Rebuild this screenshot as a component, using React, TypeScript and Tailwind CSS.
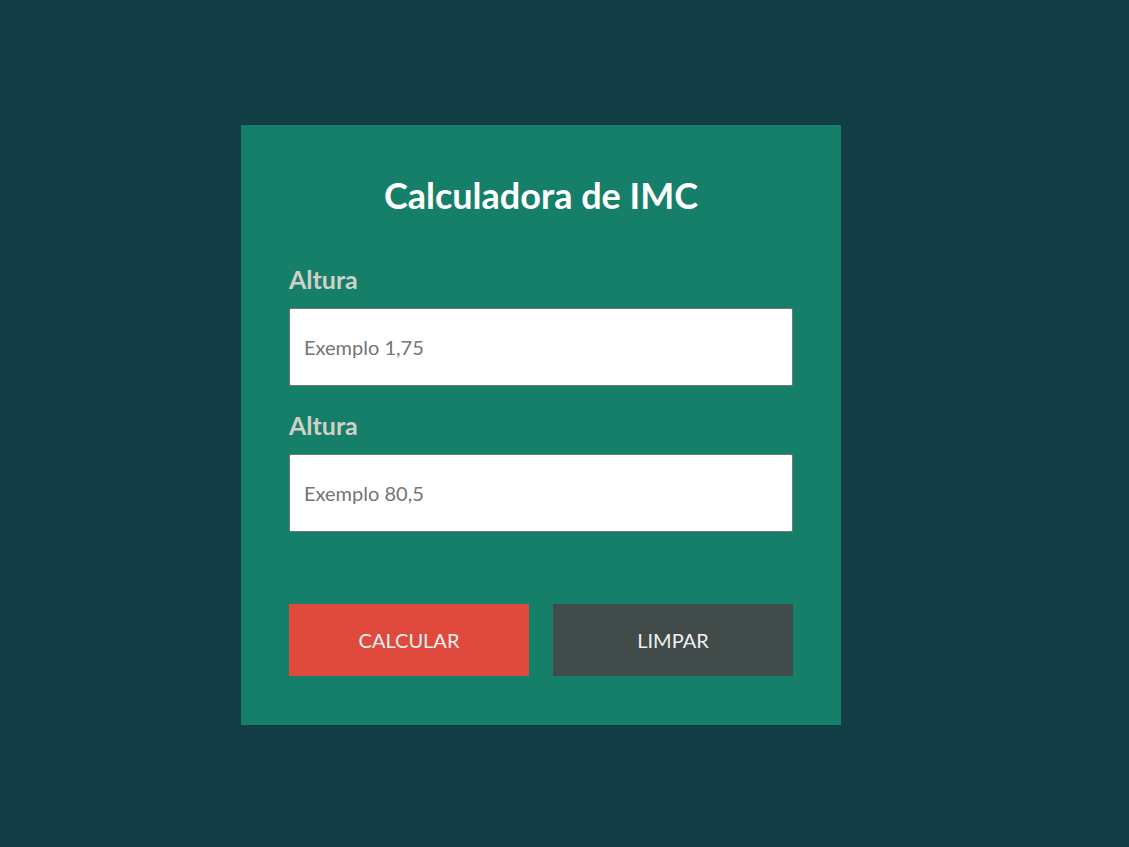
const Field = ({ label, placeholder }: { label: string; placeholder: string }) => {
  return (
    <div className="flex flex-col">
      <label className="text-[25px] font-bold leading-[30px] text-[#d0d0c8]">{label}</label>
      <input
        type="text"
        placeholder={placeholder}
        className="mt-[14px] h-[78px] w-full rounded-[2px] border border-[#777] bg-white px-[14px] text-[20px] text-[#333] outline-none placeholder:text-[#757575]"
      />
    </div>
  );
};

export default function App() {
  return (
    <div
      className="min-h-screen w-full bg-[#133e46] pl-[241px] pt-[125px]"
      style={{ fontFamily: "Lato, 'Open Sans', sans-serif" }}
    >
      <div className="flex h-[600px] w-[600px] flex-col bg-[#167f69] px-12 pt-[47px]">
        <h1 className="text-center text-[36px] font-bold leading-[46px] text-white">
          Calculadora de IMC
        </h1>
        <div className="mt-[46px] flex flex-col gap-6">
          <Field label="Altura" placeholder="Exemplo 1,75" />
          <Field label="Altura" placeholder="Exemplo 80,5" />
        </div>
        <div className="mt-[72px] flex gap-6">
          <button className="h-[72px] flex-1 bg-[#df4a3d] text-[20px] uppercase text-[#f0f0f0]">
            Calcular
          </button>
          <button className="h-[72px] flex-1 bg-[#414b4a] text-[20px] uppercase text-[#f0f0f0]">
            Limpar
          </button>
        </div>
      </div>
    </div>
  );
}
